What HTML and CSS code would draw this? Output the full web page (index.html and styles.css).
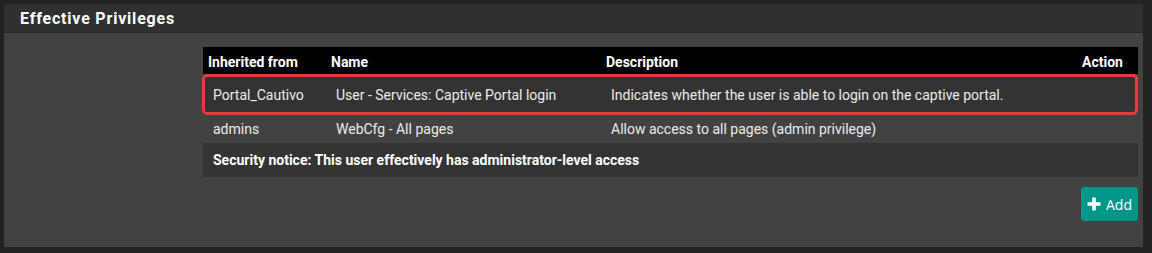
FILE: index.html
```html
<!DOCTYPE html>
<html lang="en">
<head>
  <meta charset="UTF-8">
  <title>Effective Privileges</title>
  <link rel="stylesheet" href="styles.css">
</head>
<body>
  <div class="panel">
    <div class="panel-heading">
      <h2 class="panel-title">Effective Privileges</h2>
    </div>

    <div class="panel-body">
      <div class="priv-table">
        <div class="priv-row priv-head">
          <div>Inherited from</div>
          <div>Name</div>
          <div>Description</div>
          <div>Action</div>
        </div>
        <div class="priv-row striped marked">
          <div>Portal_Cautivo</div>
          <div>User - Services: Captive Portal login</div>
          <div>Indicates whether the user is able to login on the captive portal.</div>
          <div></div>
        </div>
        <div class="priv-row">
          <div>admins</div>
          <div>WebCfg - All pages</div>
          <div>Allow access to all pages (admin privilege)</div>
          <div></div>
        </div>
        <div class="priv-notice">
          Security notice: This user effectively has administrator-level access
        </div>
      </div>

      <button class="btn-add" type="button">
        <svg width="14" height="14" viewBox="0 0 14 14" aria-hidden="true">
          <path d="M7 0.5v13M0.5 7h13" stroke="#fff" stroke-width="3.6" fill="none"/>
        </svg>
        Add
      </button>
    </div>
  </div>
</body>
</html>
```

FILE: styles.css
```css
* {
  margin: 0;
  padding: 0;
  box-sizing: border-box;
}

body {
  font-family: Roboto, "Liberation Sans", sans-serif;
  background: #222222;
  color: #ececec;
  padding: 4px 9px 6px 4px;
}

.panel {
  background: #424242;
  height: 243px;
}

.panel-heading {
  background: #303030;
  border-bottom: 1px solid #262626;
  height: 29px;
  padding: 0 16px;
  display: flex;
  align-items: center;
}

.panel-title {
  font-size: 16px;
  font-weight: 700;
  letter-spacing: 0.8px;
  color: #ffffff;
}

.panel-body {
  padding: 14px 5px 0 199px;
  display: flex;
  flex-direction: column;
  align-items: flex-end;
}

.priv-table {
  width: 100%;
  font-size: 14px;
}

.priv-row {
  display: grid;
  grid-template-columns: 123px 275px 1fr 61px;
  align-items: center;
}

.priv-row > div {
  padding: 0 5px;
}

.priv-head {
  background: #000000;
  color: #ffffff;
  font-weight: 700;
  height: 27px;
  padding-top: 2px;
}

.priv-row.striped {
  background: #333333;
}

.priv-row.marked {
  height: 41px;
  border: 3px solid #e53a3f;
  border-radius: 5px;
  padding-left: 3px;
  margin-left: -1px;
}

.priv-row:not(.priv-head):not(.marked) {
  height: 28px;
  padding-left: 5px;
  padding-bottom: 1px;
}

.priv-notice {
  background: #333333;
  color: #ffffff;
  font-weight: 700;
  height: 34px;
  padding: 0 10px;
  display: flex;
  align-items: center;
}

.btn-add {
  margin-top: 10px;
  height: 34px;
  width: 57px;
  border: none;
  border-radius: 3px;
  background: #009688;
  color: #ffffff;
  font-family: "Open Sans", "Noto Sans", sans-serif;
  font-size: 14px;
  display: flex;
  align-items: center;
  justify-content: center;
  gap: 5px;
  cursor: pointer;
}
```
